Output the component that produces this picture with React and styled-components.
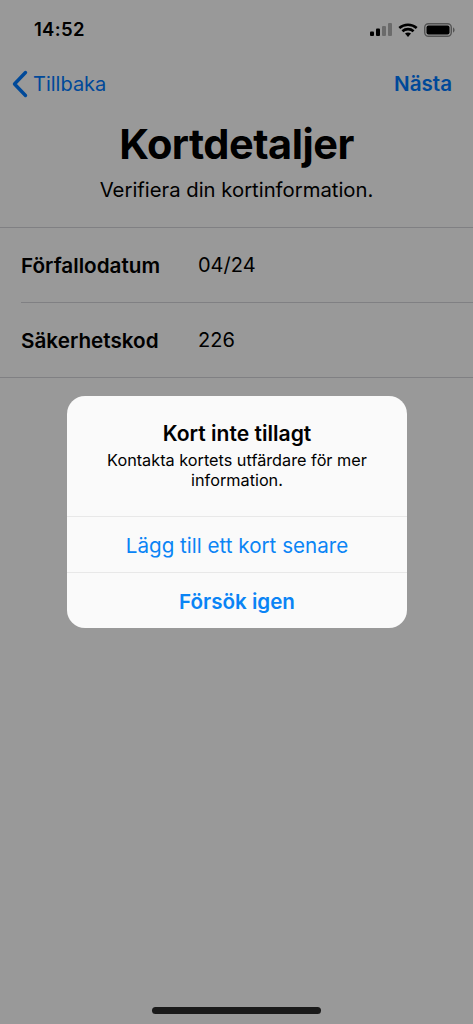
import styled, { createGlobalStyle } from "styled-components";

const GlobalStyle = createGlobalStyle`
  html, body {
    margin: 0;
    padding: 0;
    background: #fff;
    font-family: Inter, "Liberation Sans", sans-serif;
  }
`;

const rows = [
  { label: "Förfallodatum", value: "04/24" },
  { label: "Säkerhetskod", value: "226" },
];

const App = () => {
  return (
    <Screen>
      <GlobalStyle />
      <StatusBar>
        <Clock>14:52</Clock>
        <StatusIcons>
          <svg width="22" height="13" viewBox="0 0 22 13">
            <rect x="0" y="8.5" width="4" height="4.5" rx="1" fill="#000" />
            <rect x="6" y="5.5" width="4" height="7.5" rx="1" fill="#000" />
            <rect x="12" y="3" width="4" height="10" rx="1" fill="#000" opacity="0.3" />
            <rect x="18" y="0" width="4" height="13" rx="1" fill="#000" opacity="0.3" />
          </svg>
          <svg width="20" height="14" viewBox="0 0 20 14">
            <path d="M1.300 5C6.200 .6 13.800 .6 18.700 5" fill="none" stroke="#000" strokeWidth="2.600" />
            <path d="M4.400 8.200C7.600 5.400 12.400 5.400 15.600 8.200" fill="none" stroke="#000" strokeWidth="2.600" />
            <path d="M7 10.500C8.700 9.200 11.300 9.200 13 10.500L10 14Z" fill="#000" />
          </svg>
          <svg width="31" height="14" viewBox="0 0 31 14">
            <rect x="0.700" y="0.700" width="26.600" height="12.600" rx="3.800" fill="none" stroke="#000" strokeOpacity="0.45" strokeWidth="1.400" />
            <rect x="2.500" y="2.500" width="23" height="9" rx="2" fill="#000" />
            <path d="M29 4.500v5c1-.3 1.600-1.400 1.600-2.500S30 4.800 29 4.500z" fill="#000" fillOpacity="0.45" />
          </svg>
        </StatusIcons>
      </StatusBar>

      <NavBar>
        <NavButton>
          <svg width="17" height="28" viewBox="0 0 17 28">
            <path d="M14.500 2.500 3.500 14l11 11.500" fill="none" stroke="#007aff" strokeWidth="3.400" strokeLinecap="round" strokeLinejoin="round" />
          </svg>
          Tillbaka
        </NavButton>
        <NavButton $bold>Nästa</NavButton>
      </NavBar>

      <Title>Kortdetaljer</Title>
      <Subtitle>Verifiera din kortinformation.</Subtitle>

      <Form>
        {rows.map((row) => (
          <Row key={row.label}>
            <RowInner>
              <Label>{row.label}</Label>
              <Value>{row.value}</Value>
            </RowInner>
          </Row>
        ))}
      </Form>

      <Dim>
        <Alert>
          <AlertBody>
            <AlertTitle>Kort inte tillagt</AlertTitle>
            <AlertText>
              Kontakta kortets utfärdare för mer
              <br />
              information.
            </AlertText>
          </AlertBody>
          <AlertAction>Lägg till ett kort senare</AlertAction>
          <AlertAction $bold>Försök igen</AlertAction>
        </Alert>
        <HomeBar />
      </Dim>
    </Screen>
  );
};

const Screen = styled.div`
  position: relative;
  width: 473px;
  height: 1024px;
  overflow: hidden;
  background: #fff;
  color: #000;
`;

const StatusBar = styled.div`
  display: flex;
  align-items: center;
  justify-content: space-between;
  height: 59px;
  padding: 0 18px 0 34px;
  box-sizing: border-box;
`;

const Clock = styled.div`
  margin-bottom: 2px;
  font-size: 18.5px;
  font-weight: 600;
  letter-spacing: 0.3px;
`;

const StatusIcons = styled.div`
  display: flex;
  align-items: center;
  gap: 6px;
`;

const NavBar = styled.div`
  display: flex;
  align-items: center;
  justify-content: space-between;
  height: 49px;
  padding: 0 21px 0 11px;
`;

const NavButton = styled.div`
  display: flex;
  align-items: center;
  gap: 5px;
  color: #007aff;
  font-size: ${(props) => (props.$bold ? "20.6px" : "20px")};
  font-weight: ${(props) => (props.$bold ? 600 : 400)};
`;

const Title = styled.h1`
  margin: 12px 0 0;
  height: 48px;
  line-height: 48px;
  text-align: center;
  font-size: 41.5px;
  font-weight: 700;
  letter-spacing: -0.5px;
`;

const Subtitle = styled.p`
  margin: 7px 0 0;
  height: 30px;
  line-height: 30px;
  text-align: center;
  font-size: 20.3px;
`;

const Form = styled.div`
  margin-top: 22px;
  border-top: 1px solid #d6d6da;
  border-bottom: 1px solid #d6d6da;
`;

const Row = styled.div`
  padding-left: 21px;
  & + & > div {
    border-top: 1px solid #d6d6da;
  }
`;

const RowInner = styled.div`
  display: flex;
  align-items: center;
  height: 74.2px;
`;

const Label = styled.div`
  width: 177px;
  font-size: 20.7px;
  font-weight: 600;
`;

const Value = styled.div`
  font-size: 20px;
`;

const Dim = styled.div`
  position: absolute;
  inset: 0;
  background: rgba(0, 0, 0, 0.4);
`;

const Alert = styled.div`
  position: absolute;
  top: 396px;
  left: 67px;
  width: 340px;
  border-radius: 18px;
  background: #fafafa;
  overflow: hidden;
`;

const AlertBody = styled.div`
  height: 120px;
  padding-top: 25px;
  box-sizing: border-box;
  text-align: center;
`;

const AlertTitle = styled.div`
  font-size: 21.1px;
  line-height: 26px;
  font-weight: 600;
`;

const AlertText = styled.div`
  margin-top: 3px;
  font-size: 16.25px;
  line-height: 20px;
`;

const AlertAction = styled.div`
  height: 56px;
  box-sizing: border-box;
  border-top: 1px solid #e8e8e8;
  padding-top: 2px;
  display: flex;
  align-items: center;
  justify-content: center;
  color: #0a84f5;
  font-size: 20.6px;
  font-weight: ${(props) => (props.$bold ? 600 : 400)};
`;

const HomeBar = styled.div`
  position: absolute;
  left: 152px;
  bottom: 10px;
  width: 169px;
  height: 7px;
  border-radius: 4px;
  background: #1a1a1a;
`;

export default App;
